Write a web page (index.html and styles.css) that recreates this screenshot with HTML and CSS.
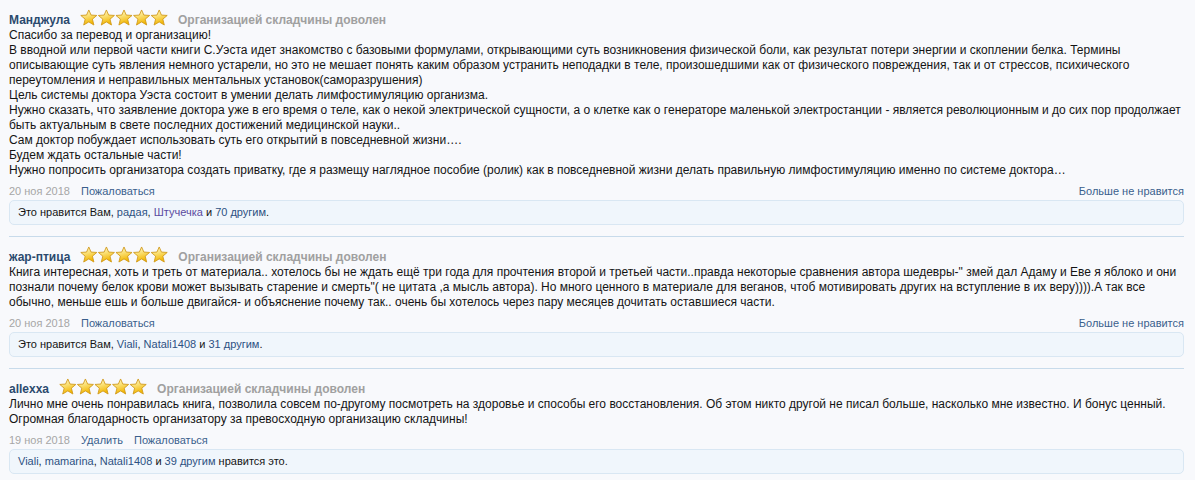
FILE: index.html
```html
<!DOCTYPE html>
<html lang="ru">
<head>
<meta charset="utf-8">
<title>Отзывы</title>
<link rel="stylesheet" href="styles.css">
</head>
<body>
<svg class="defs" width="0" height="0" aria-hidden="true">
  <defs>
    <linearGradient id="starfill" x1="0" y1="0" x2="0.3" y2="1">
      <stop offset="0" stop-color="#fffbe0"/>
      <stop offset="0.45" stop-color="#fbe27a"/>
      <stop offset="1" stop-color="#f2b500"/>
    </linearGradient>
    <symbol id="star" viewBox="0 0 18 17">
      <polygon points="9,0.8 11.3,6 17.2,6.4 12.7,10.2 14.2,16.2 9,13 3.8,16.2 5.3,10.2 0.8,6.4 6.7,6" fill="url(#starfill)" stroke="#d09a1c" stroke-width="0.9" stroke-linejoin="round"/>
    </symbol>
  </defs>
</svg>
<div class="reviews">
  <div class="review">
    <div class="head">
      <span class="author">Манджула</span>
      <svg class="stars" viewBox="0 0 88 17" width="88" height="17"><use href="#star" x="0" width="17.6" height="17"/><use href="#star" x="17.6" width="17.6" height="17"/><use href="#star" x="35.2" width="17.6" height="17"/><use href="#star" x="52.8" width="17.6" height="17"/><use href="#star" x="70.4" width="17.6" height="17"/></svg>
      <span class="verdict">Организацией складчины доволен</span>
    </div>
    <div class="body">Спасибо за перевод и организацию!<br>В вводной или первой части книги С.Уэста идет знакомство с базовыми формулами, открывающими суть возникновения физической боли, как результат потери энергии и скоплении белка. Термины описывающие суть явления немного устарели, но это не мешает понять каким образом устранить неподадки в теле, произошедшими как от физического повреждения, так и от стрессов, психического переутомления и неправильных ментальных установок(саморазрушения)<br>Цель системы доктора Уэста состоит в умении делать лимфостимуляцию организма.<br>Нужно сказать, что заявление доктора уже в его время о теле, как о некой электрической сущности, а о клетке как о генераторе маленькой электростанции - является революционным и до сих пор продолжает быть актуальным в свете последних достижений медицинской науки..<br>Сам доктор побуждает использовать суть его открытий в повседневной жизни….<br>Будем ждать остальные части!<br>Нужно попросить организатора создать приватку, где я размещу наглядное пособие (ролик) как в повседневной жизни делать правильную лимфостимуляцию именно по системе доктора…</div>
    <div class="meta">
      <span class="date">20 ноя 2018</span>
      <a class="act" href="#">Пожаловаться</a>
      <a class="act unlike" href="#">Больше не нравится</a>
    </div>
    <div class="likes">Это нравится Вам, <a class="u" href="#">радая</a>, <a class="u v" href="#">Штучечка</a> и <a class="u" href="#">70 другим</a>.</div>
  </div>

  <div class="review">
    <div class="head">
      <span class="author">жар-птица</span>
      <svg class="stars" viewBox="0 0 88 17" width="88" height="17"><use href="#star" x="0" width="17.6" height="17"/><use href="#star" x="17.6" width="17.6" height="17"/><use href="#star" x="35.2" width="17.6" height="17"/><use href="#star" x="52.8" width="17.6" height="17"/><use href="#star" x="70.4" width="17.6" height="17"/></svg>
      <span class="verdict">Организацией складчины доволен</span>
    </div>
    <div class="body">Книга интересная, хоть и треть от материала.. хотелось бы не ждать ещё три года для прочтения второй и третьей части..правда некоторые сравнения автора шедевры-" змей дал Адаму и Еве я яблоко и они познали почему белок крови может вызывать старение и смерть"( не цитата ,а мысль автора). Но много ценного в материале для веганов, чтоб мотивировать других на вступление в их веру)))).А так все обычно, меньше ешь и больше двигайся- и объяснение почему так.. очень бы хотелось через пару месяцев дочитать оставшиеся части.</div>
    <div class="meta">
      <span class="date">20 ноя 2018</span>
      <a class="act" href="#">Пожаловаться</a>
      <a class="act unlike" href="#">Больше не нравится</a>
    </div>
    <div class="likes">Это нравится Вам, <a class="u" href="#">Viali</a>, <a class="u" href="#">Natali1408</a> и <a class="u" href="#">31 другим</a>.</div>
  </div>

  <div class="review">
    <div class="head">
      <span class="author">allexxa</span>
      <svg class="stars" viewBox="0 0 88 17" width="88" height="17"><use href="#star" x="0" width="17.6" height="17"/><use href="#star" x="17.6" width="17.6" height="17"/><use href="#star" x="35.2" width="17.6" height="17"/><use href="#star" x="52.8" width="17.6" height="17"/><use href="#star" x="70.4" width="17.6" height="17"/></svg>
      <span class="verdict">Организацией складчины доволен</span>
    </div>
    <div class="body">Лично мне очень понравилась книга, позволила совсем по-другому посмотреть на здоровье и способы его восстановления. Об этом никто другой не писал больше, насколько мне известно. И бонус ценный.<br>Огромная благодарность организатору за превосходную организацию складчины!</div>
    <div class="meta">
      <span class="date">19 ноя 2018</span>
      <a class="act" href="#">Удалить</a>
      <a class="act" href="#">Пожаловаться</a>
    </div>
    <div class="likes"><a class="u" href="#">Viali</a>, <a class="u" href="#">mamarina</a>, <a class="u" href="#">Natali1408</a> и <a class="u" href="#">39 другим</a> нравится это.</div>
  </div>
</div>
</body>
</html>
```

FILE: styles.css
```css
html, body {
  margin: 0;
  padding: 0;
  background: #f8f9fc;
}
body {
  font-family: "Liberation Sans", Arial, sans-serif;
  font-size: 12px;
  line-height: 15px;
  color: #141414;
}
.defs {
  position: absolute;
  width: 0;
  height: 0;
  overflow: hidden;
}
.reviews {
  margin: 0 11px 0 9px;
}
.review {
  padding: 13px 0 11px;
}
.review + .review {
  border-top: 1px solid #c8dbeb;
}
.head {
  display: flex;
  align-items: center;
  height: 15px;
}
.author {
  font-weight: bold;
  color: #2b4a6e;
}
.stars {
  flex: none;
  align-self: flex-start;
  margin: -4px 10px 0 10px;
}
.verdict {
  font-weight: bold;
  color: #a0a0a0;
}
.body {
  color: #141414;
}
.meta {
  display: flex;
  margin-top: 7px;
  font-size: 11px;
  line-height: 13px;
  gap: 11px;
}
.date {
  color: #a6a6a6;
}
.act {
  color: #3a5f8c;
  text-decoration: none;
}
.unlike {
  margin-left: auto;
}
.likes {
  margin-top: 2px;
  padding: 5px 8px;
  border: 1px solid #d9e7f3;
  border-radius: 5px;
  background: #f0f6fc;
  font-size: 11px;
  line-height: 13px;
  color: #141414;
}
.u {
  color: #2d5182;
  text-decoration: none;
}
.u.v {
  color: #5a4aa0;
}
```
